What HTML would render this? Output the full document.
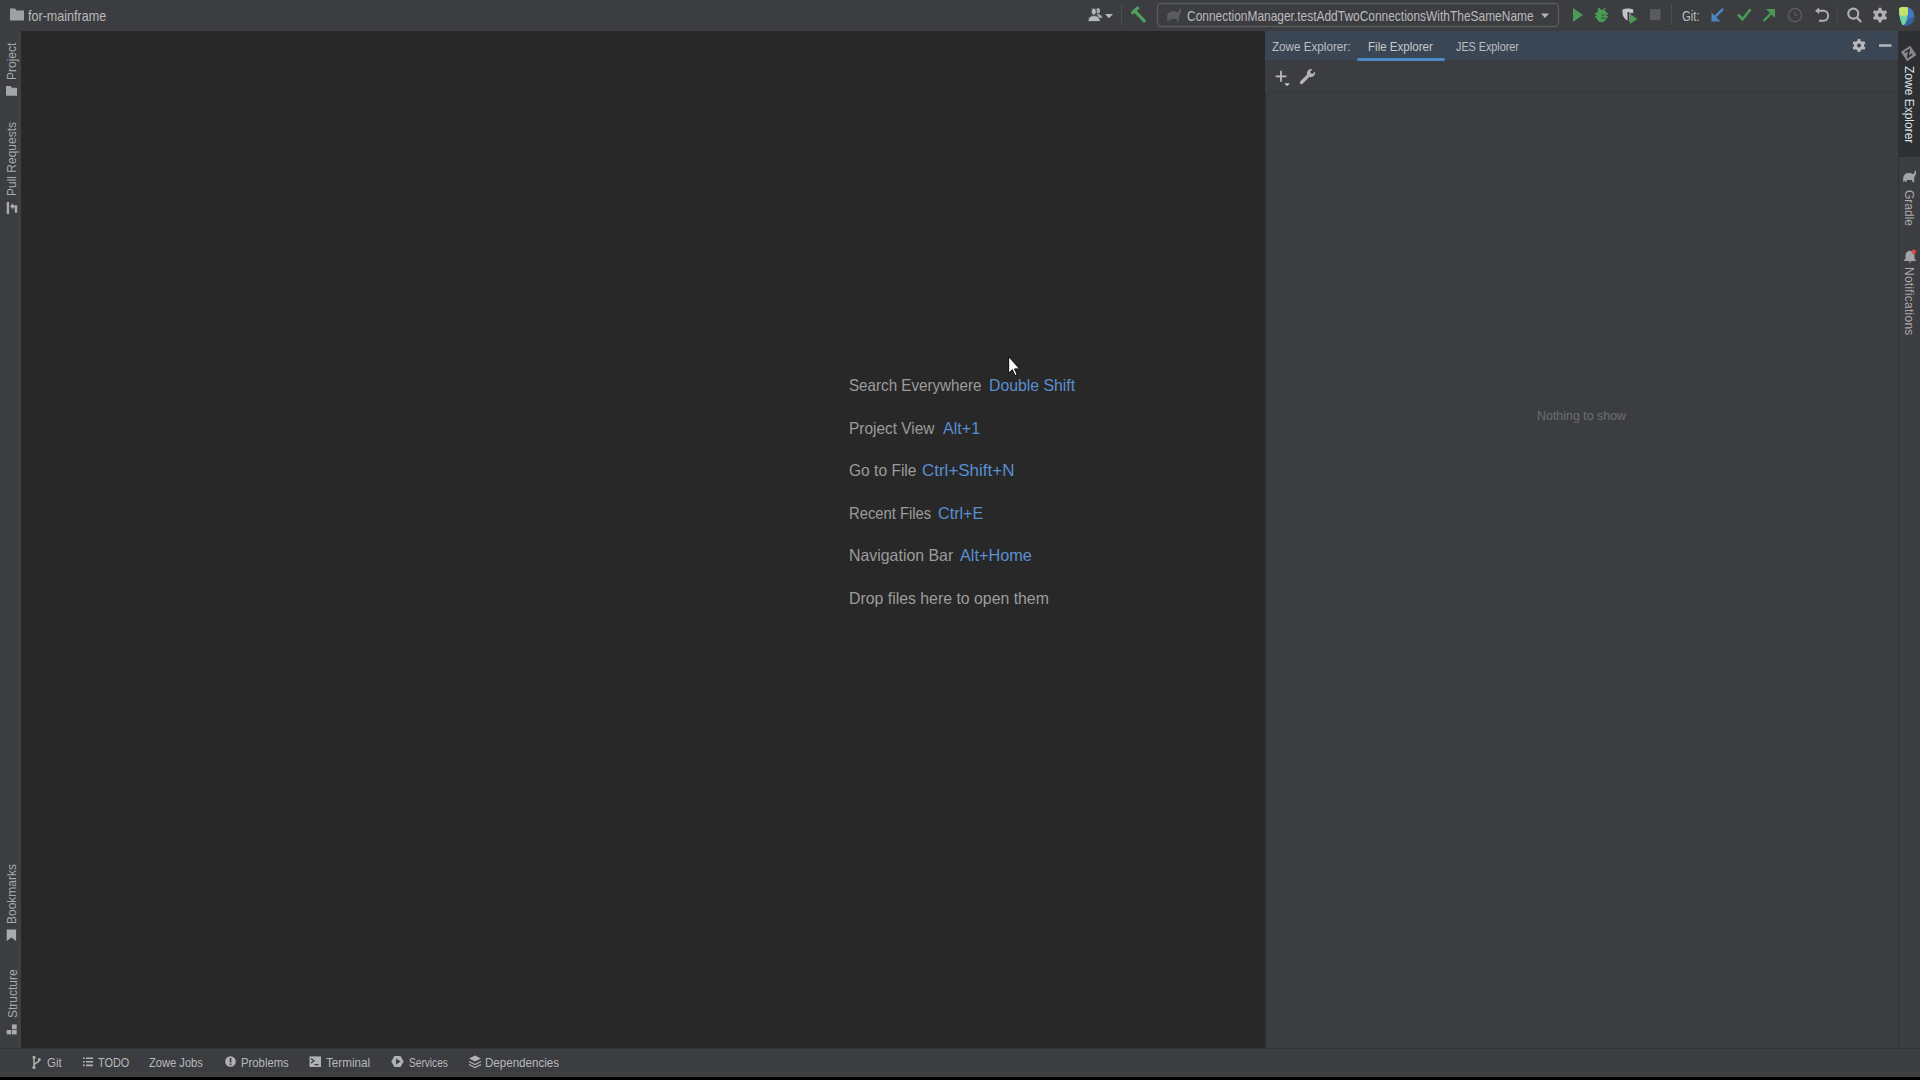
<!DOCTYPE html>
<html>
<head>
<meta charset="utf-8">
<style>
*{margin:0;padding:0;box-sizing:border-box}
html,body{width:1920px;height:1080px;overflow:hidden;background:#000}
body{position:relative;font-family:"Liberation Sans",sans-serif;color:#bbb}
.a{position:absolute}
.t{position:absolute;white-space:nowrap;line-height:1;transform-origin:0 0}
#top{left:0;top:0;width:1920px;height:31px;background:#3c3d41}
#lstrip{left:0;top:31px;width:21px;height:1018px;background:#3c3d41;border-right:1px solid #38393d}
#editor{left:21px;top:31px;width:1244px;height:1018px;background:#282828}
#panel{left:1265px;top:31px;width:633px;height:1018px;background:#3c3d41;border-left:1px solid #2f3034}
#phead{left:1265px;top:31px;width:633px;height:29px;background:#3b4654}
#ptool{left:1265px;top:60px;width:633px;height:33px;background:#3c3d41;border-bottom:1px solid #36373b}
#rstrip{left:1898px;top:31px;width:22px;height:1018px;background:#3c3d41;border-left:1px solid #313236}
#ractive{left:1899px;top:31px;width:21px;height:126px;background:#2e2f33}
#bottom{left:0;top:1048px;width:1920px;height:29px;background:#3c3d41;border-top:1px solid #323337;border-bottom:5px solid #3e403f}
.ctr{font-size:16.5px;color:#9c9c9c}
.blue{color:#5a8fd0}
.vt{position:absolute;white-space:nowrap;line-height:1;font-size:12px;color:#a9aaab;transform-origin:0 0}
svg{position:absolute;left:0;top:0;overflow:visible}
</style>
</head>
<body>
<div id="top" class="a"></div>
<div id="lstrip" class="a"></div>
<div class="a" style="left:17px;top:31px;width:4px;height:1018px;background:#3f4044"></div>
<div id="editor" class="a"></div>
<div id="panel" class="a"></div>
<div id="phead" class="a"></div>
<div id="ptool" class="a"></div>
<div id="rstrip" class="a"></div>
<div id="ractive" class="a"></div>
<div id="bottom" class="a"></div>

<!-- ============ top bar ============ -->
<div class="t" style="left:28px;top:8.6px;font-size:14.2px;color:#bbbbbb;transform:scaleX(0.886)">for-mainframe</div>
<div class="t" style="left:1186.5px;top:8.6px;font-size:14.2px;color:#bbbbbb;transform:scaleX(0.842)">ConnectionManager.testAddTwoConnectionsWithTheSameName</div>
<div class="t" style="left:1681.6px;top:8.6px;font-size:14px;color:#bbbbbb;transform:scaleX(0.81)">Git:</div>

<svg width="1920" height="30" viewBox="0 0 1920 30">
  <!-- folder -->
  <path d="M10 8.5 h5 l1.5 2 h7.5 v10 h-14 z" fill="#9da0a4"/>
  <!-- users icon -->
  <ellipse cx="1098.2" cy="10.8" rx="1.9" ry="2.8" fill="#a9abad"/>
  <path d="M1096.5 13.8 C1100 14.2 1102.2 15.6 1102.3 17.8 L1099 18z" fill="#a9abad"/>
  <ellipse cx="1093.8" cy="11.6" rx="2.5" ry="3.5" fill="#b5b7b9" stroke="#3c3d41" stroke-width="0.8"/>
  <path d="M1088 21.5 C1088 17.6 1090.4 15.6 1093.8 15.6 C1097.2 15.6 1100.2 17.6 1100.2 21.5z" fill="#b5b7b9" stroke="#3c3d41" stroke-width="0.8"/>
  <path d="M1105 14 h8 l-4 4.2z" fill="#b5b6b8"/>
  <!-- separators -->
  <rect x="1121" y="4" width="1" height="21" fill="#4d4e52"/>
  <rect x="1671" y="4" width="1" height="21" fill="#4d4e52"/>
  <rect x="1837" y="4" width="1" height="21" fill="#46474b"/>
  <!-- hammer -->
  <path d="M1131.6 13.6 L1138.6 7.2" stroke="#52a05c" stroke-width="3"/>
  <path d="M1134.5 10.6 L1144.2 20.9" stroke="#52a05c" stroke-width="3.3" stroke-linecap="round"/>
  <!-- run config box -->
  <rect x="1157.5" y="3.5" width="401" height="23" rx="3.5" fill="none" stroke="#5a5b5f" stroke-width="1.3"/>
  <!-- gradle elephant -->
  <path transform="translate(1166.5 8.5) scale(1.08)" d="M0.5 11.5 V8 C0.5 4.5 3 2.5 6.5 2.5 C8.5 2.5 9.5 3.2 10.5 3.8 C11.5 3 12 1.8 11.8 0.5 L12.8 0 C13.8 1.5 13.6 4 12.2 5.5 C11.8 6 11.5 6.5 11.5 7.5 V11.5 H9.5 V9.5 H4 V11.5 H2.5 V10 C1.5 10.3 1.5 11 1.5 11.5 Z" fill="#5b5c60"/>
  <path d="M1541 13.5 h8 l-4 4.6z" fill="#b5b6b8"/>
  <!-- run -->
  <path d="M1573 8 v13.8 l10-6.9z" fill="#4c9a57"/>
  <!-- debug bug -->
  <path d="M1599 7.5 l2 2.2 h2 l2-2.2 l0.7 0.9 l-1.3 1.9 c1.1 0.6 1.8 1.6 2 2.8 h1.6 v1.4 h-1.5 v1.8 h1.5 v1.4 h-1.6 c-0.3 2.5-2.3 4.6-4.9 4.6 s-4.6-2.1-4.9-4.6 h-1.6 v-1.4 h1.5 v-1.8 h-1.5 v-1.4 h1.6 c0.2-1.2 0.9-2.2 2-2.8 l-1.3-1.9z" fill="#4c9a57"/>
  <path d="M1600.6 14.5 h4.8 l-2.4 1.8z M1600.6 17.5 h4.8 l-2.4 1.8z" fill="#2e5f37"/>
  <!-- coverage -->
  <path d="M1622.5 9.5 c2-0.8 4-1 5.5-1 s3.5 0.2 5.2 1 v3.5 h-3 v9 c-3-1-7.2-3.8-7.7-8.5z" fill="#c2c3c5"/>
  <rect x="1627.5" y="12" width="2" height="10" fill="#3c3d41"/>
  <path d="M1630 14 v10 l7.5-5z" fill="#4c9a57"/>
  <!-- stop -->
  <rect x="1650" y="9.2" width="10.5" height="11" fill="#5a5b5e"/>
  <!-- git update blue arrow -->
  <path d="M1723 8.8 L1714 17.8" stroke="#4985c0" stroke-width="2.4"/>
  <path d="M1711.5 12.5 v9 h9z" fill="#4985c0"/>
  <!-- check -->
  <path d="M1738 14.5 l4.5 4.7 l8-10" stroke="#4c9a57" stroke-width="2.6" fill="none"/>
  <!-- push arrow -->
  <path d="M1763.5 21 L1771 13.5" stroke="#4c9a57" stroke-width="2.4"/>
  <path d="M1775 9 v8.5 h-0.5 l-8.5-8.5z" fill="#4c9a57"/>
  <!-- clock -->
  <circle cx="1795" cy="15.1" r="6.6" fill="none" stroke="#5c5d61" stroke-width="1.4"/>
  <path d="M1795 11.5 v4 h2" stroke="#5c5d61" stroke-width="1" fill="none"/>
  <!-- undo -->
  <path d="M1818 10.8 h5.5 c2.8 0 4.6 2.2 4.6 5 s-1.8 5 -4.6 5 h-4.5" stroke="#afb0b2" stroke-width="2" fill="none"/>
  <path d="M1815 10.8 l4.2-3.2 v6.4z" fill="#afb0b2"/>
  <!-- search -->
  <circle cx="1853.3" cy="13.6" r="5" fill="none" stroke="#afb0b2" stroke-width="2.1"/>
  <path d="M1856.8 17.4 l4.3 4.6" stroke="#afb0b2" stroke-width="2.3"/>
  <!-- gear -->
  <g transform="translate(1880 15)">
    <path d="M-1.3 -7.2 h2.6 l0.5 2.2 l1.8 1 l2.2-0.7 l1.3 2.2 l-1.7 1.6 v2 l1.7 1.6 l-1.3 2.2 l-2.2-0.7 l-1.8 1 l-0.5 2.2 h-2.6 l-0.5-2.2 l-1.8-1 l-2.2 0.7 l-1.3-2.2 l1.7-1.6 v-2 l-1.7-1.6 l1.3-2.2 l2.2 0.7 l1.8-1z" fill="#afb0b2"/>
    <circle r="2" fill="#3c3d41"/>
  </g>
  <!-- toolbox logo -->
  <path d="M1899.3 8 C1903 6.3 1908 6.3 1911.2 9 C1914.8 12 1915.2 18.5 1912.6 22.3 C1910.5 25.2 1906 26.6 1903 25.6 C1900.4 22 1898.9 15 1899.3 8z" fill="#4476be"/>
  <path d="M1908 20 C1910 18 1912.5 17 1914.6 16.8 C1914.4 19 1913.8 21 1912.6 22.3 C1910.5 25.2 1906 26.6 1903 25.6 C1905 24 1906.5 22 1908 20z" fill="#3a5f98"/>
  <path d="M1899.3 8 C1902 6.8 1905.5 6.7 1907.8 7.6 C1908.4 12 1907.5 18 1905.4 23.5 C1904.5 24.5 1903.5 25 1902.6 25 C1900.3 21.5 1898.9 15 1899.3 8z" fill="#6fd6a0"/>
  <path d="M1899.3 8 C1902 6.8 1905.5 6.7 1907.8 7.6 C1908.2 10 1908.1 12.5 1907.7 15 C1905 15.8 1902 15.8 1899.4 15.3 C1899.1 12.8 1899.1 10.4 1899.3 8z" fill="#c4e26c"/>
  </svg>

<!-- ============ center ============ -->
<div class="t ctr" style="left:849px;top:377px;transform:scaleX(0.92)">Search Everywhere</div>
<div class="t ctr blue" style="left:988.7px;top:377px;transform:scaleX(0.958)">Double Shift</div>
<div class="t ctr" style="left:849px;top:419.5px;transform:scaleX(0.934)">Project View</div>
<div class="t ctr blue" style="left:943px;top:419.5px;transform:scaleX(0.974)">Alt+1</div>
<div class="t ctr" style="left:849px;top:462px;transform:scaleX(0.943)">Go to File</div>
<div class="t ctr blue" style="left:922.3px;top:462px;transform:scaleX(1.028)">Ctrl+Shift+N</div>
<div class="t ctr" style="left:849px;top:504.6px;transform:scaleX(0.896)">Recent Files</div>
<div class="t ctr blue" style="left:938px;top:504.6px;transform:scaleX(0.978)">Ctrl+E</div>
<div class="t ctr" style="left:849px;top:547px;transform:scaleX(0.963)">Navigation Bar</div>
<div class="t ctr blue" style="left:960px;top:547px;transform:scaleX(0.986)">Alt+Home</div>
<div class="t ctr" style="left:849px;top:590px;transform:scaleX(0.96)">Drop files here to open them</div>

<!-- mouse cursor -->
<svg width="1920" height="1080" viewBox="0 0 1920 1080" style="z-index:5">
  <path d="M1008.6 356.6 v16.6 l3.7-3.5 l2.7 5.9 l2.2-1 l-2.6-5.7 h5.1z" fill="#f8f8f8" stroke="#080808" stroke-width="1"/>
</svg>

<!-- ============ panel ============ -->
<div class="t" style="left:1272px;top:40px;font-size:13px;color:#bcbec4;transform:scaleX(0.897)">Zowe Explorer:</div>
<div class="t" style="left:1368px;top:40px;font-size:13px;color:#c7c9cd;transform:scaleX(0.889)">File Explorer</div>
<div class="t" style="left:1456px;top:40px;font-size:13px;color:#bcbec4;transform:scaleX(0.829)">JES Explorer</div>
<div class="a" style="left:1357px;top:58px;width:88px;height:3px;background:#4a88c7;border-radius:1.5px"></div>
<div class="t" style="left:1536.5px;top:410px;font-size:12px;color:#6b6e72;transform:scaleX(1.035)">Nothing to show</div>

<svg width="1920" height="1080" viewBox="0 0 1920 1080">
  <!-- panel gear -->
  <g transform="translate(1859 45.5)">
    <path d="M-1.2 -6.6 h2.4 l0.5 2 l1.6 0.9 l2-0.6 l1.2 2 l-1.5 1.5 v1.6 l1.5 1.5 l-1.2 2 l-2-0.6 l-1.6 0.9 l-0.5 2 h-2.4 l-0.5-2 l-1.6-0.9 l-2 0.6 l-1.2-2 l1.5-1.5 v-1.6 l-1.5-1.5 l1.2-2 l2 0.6 l1.6-0.9z" fill="#b8babd"/>
    <circle r="2" fill="#3b4654"/>
  </g>
  <rect x="1879" y="44.3" width="12.5" height="2.4" fill="#b8babd"/>
  <!-- plus with small arrow -->
  <path d="M1275.7 76.3 h10.7 M1281 70.7 v11.1" stroke="#b8babd" stroke-width="1.8"/>
  <path d="M1284.2 83.3 h5.8 l-2.9 2.9z" fill="#c4c6c9"/>
  <!-- wrench -->
  <path d="M1301.5 82.5 l7-7" stroke="#b2b4b7" stroke-width="3.2" stroke-linecap="round"/>
  <path d="M1307 72.5 c0.5-2.5 3-4 5.5-3.3 l-2.3 2.3 l0.6 1.8 l1.8 0.6 l2.3-2.3 c0.7 2.5-0.8 5-3.3 5.5 c-2.8 0.5-5.2-1.8-4.6-4.6z" fill="#b2b4b7"/>
  <!-- right strip zowe icon -->
  <g transform="translate(1908.7 53.4) rotate(-34)">
    <rect x="-5.6" y="-5.6" width="11.2" height="11.2" fill="#88898c"/>
    <path d="M-2.8 -2.8 h5.2 l-5.2 5.4 h5.4" stroke="#2a2b2e" stroke-width="1.5" fill="none"/>
  </g>
  <!-- gradle icon right strip -->
  <path transform="translate(1902.7 170.5)" d="M0.5 11.5 V8 C0.5 4.5 3 2.5 6.5 2.5 C8.5 2.5 9.5 3.2 10.5 3.8 C11.5 3 12 1.8 11.8 0.5 L12.8 0 C13.8 1.5 13.6 4 12.2 5.5 C11.8 6 11.5 6.5 11.5 7.5 V11.5 H9.5 V9.5 H4 V11.5 H2.5 V10 C1.5 10.3 1.5 11 1.5 11.5 Z" fill="#a2a4a7"/>
  <!-- bell -->
  <path d="M1904 261 c0-1.3 1-1.8 1.5-2.3 v-3.5 c0-2.5 2-4.5 4.5-4.5 s4.5 2 4.5 4.5 v3.5 c0.5 0.5 1.5 1 1.5 2.3z" fill="#a2a4a7"/>
  <path d="M1908.5 261.5 h3 l-1.5 1.5z" fill="#a2a4a7"/>
  <circle cx="1913.8" cy="251.8" r="2.3" fill="#d64a4a"/>
  <!-- left strip: project folder -->
  <path d="M6 86 h4.5 l1.5 1.8 h5 v8 h-11z" fill="#a3a5a8"/>
  <!-- pull requests icon -->
  <rect x="6.7" y="202" width="2.4" height="12" fill="#a9abae"/>
  <path d="M10 206.3 L13.2 203 V205.2 H17.2 V212.8 H14.8 V207.4 H13.2 V209.6z" fill="#a9abae"/>
  <!-- bookmarks icon -->
  <path d="M6.7 929.4 h9.4 v11.7 l-4.7-3.6 l-4.7 3.6z" fill="#a9abae"/>
  <!-- structure icon -->
  <rect x="6.7" y="1030" width="4.4" height="4.4" fill="#a9abae"/>
  <rect x="11.9" y="1030" width="4.8" height="4.4" fill="#a9abae"/>
  <rect x="11.9" y="1024.4" width="4.8" height="4.8" fill="#a9abae"/>
</svg>

<!-- vertical labels right (rotated 90deg cw) -->
<div class="vt" style="left:1915px;top:65.5px;transform:rotate(90deg);color:#dfe0e2">Zowe Explorer</div>
<div class="vt" style="left:1914.5px;top:189.5px;transform:rotate(90deg)">Gradle</div>
<div class="vt" style="left:1914.5px;top:267px;transform:rotate(90deg);letter-spacing:0.25px">Notifications</div>
<!-- vertical labels left (rotated -90deg) -->
<div class="vt" style="left:6.3px;top:80px;transform:rotate(-90deg)">Project</div>
<div class="vt" style="left:6.3px;top:196px;transform:rotate(-90deg)">Pull Requests</div>
<div class="vt" style="left:6.3px;top:924px;transform:rotate(-90deg)">Bookmarks</div>
<div class="vt" style="left:7px;top:1018px;transform:rotate(-90deg)">Structure</div>

<!-- ============ bottom bar ============ -->
<div class="t" style="left:47px;top:1056px;font-size:13px;color:#b8b9bb;transform:scaleX(0.882)">Git</div>
<div class="t" style="left:98px;top:1056px;font-size:13px;color:#b8b9bb;transform:scaleX(0.838)">TODO</div>
<div class="t" style="left:149px;top:1056px;font-size:13px;color:#b8b9bb;transform:scaleX(0.857)">Zowe Jobs</div>
<div class="t" style="left:241px;top:1056px;font-size:13px;color:#b8b9bb;transform:scaleX(0.87)">Problems</div>
<div class="t" style="left:326px;top:1056px;font-size:13px;color:#b8b9bb;transform:scaleX(0.898)">Terminal</div>
<div class="t" style="left:408.5px;top:1056px;font-size:13px;color:#b8b9bb;transform:scaleX(0.78)">Services</div>
<div class="t" style="left:485px;top:1056px;font-size:13px;color:#b8b9bb;transform:scaleX(0.89)">Dependencies</div>
<svg width="1920" height="1080" viewBox="0 0 1920 1080">
  <!-- git branch -->
  <path d="M34 1057.5 V1067.5 M39.3 1059.5 C39.3 1063.5 34 1062 34 1065.5" stroke="#b0b1b3" stroke-width="1.5" fill="none"/>
  <circle cx="34" cy="1057.3" r="1.5" fill="#b0b1b3"/><circle cx="34" cy="1067.4" r="1.6" fill="#b0b1b3"/><circle cx="39.3" cy="1059.4" r="1.5" fill="#b0b1b3"/>
  <!-- todo list -->
  <path d="M83 1058.2 h1.8 M86 1058.2 h7 M83 1061.8 h1.8 M86 1061.8 h7 M83 1065.4 h1.8 M86 1065.4 h7" stroke="#b0b1b3" stroke-width="1.6"/>
  <!-- problems -->
  <circle cx="230.5" cy="1061.5" r="5.3" fill="#b0b1b3"/>
  <rect x="229.7" y="1058" width="1.7" height="4.5" fill="#3c3d41"/>
  <rect x="229.7" y="1063.5" width="1.7" height="1.6" fill="#3c3d41"/>
  <!-- terminal -->
  <rect x="309.5" y="1056.4" width="11.5" height="10.6" fill="#b0b1b3"/>
  <path d="M311 1058.5 l3 2.3 l-3 2.3" stroke="#3c3d41" stroke-width="1.3" fill="none"/>
  <rect x="314.5" y="1064" width="4" height="1.3" fill="#3c3d41"/>
  <!-- services hexagon -->
  <path d="M394.5 1056 h6 l3.2 5.5 l-3.2 5.5 h-6 l-3.2-5.5z" fill="#b0b1b3"/>
  <path d="M396 1058.5 v6 l4.6-3z" fill="#3c3d41"/>
  <!-- dependencies layers -->
  <path d="M475 1055.5 l6 3 l-6 3 l-6-3z" fill="#b0b1b3"/>
  <path d="M469 1061.5 l6 3 l6-3 M469 1064.5 l6 3 l6-3" stroke="#b0b1b3" stroke-width="1.3" fill="none"/>
</svg>
</body>
</html>
